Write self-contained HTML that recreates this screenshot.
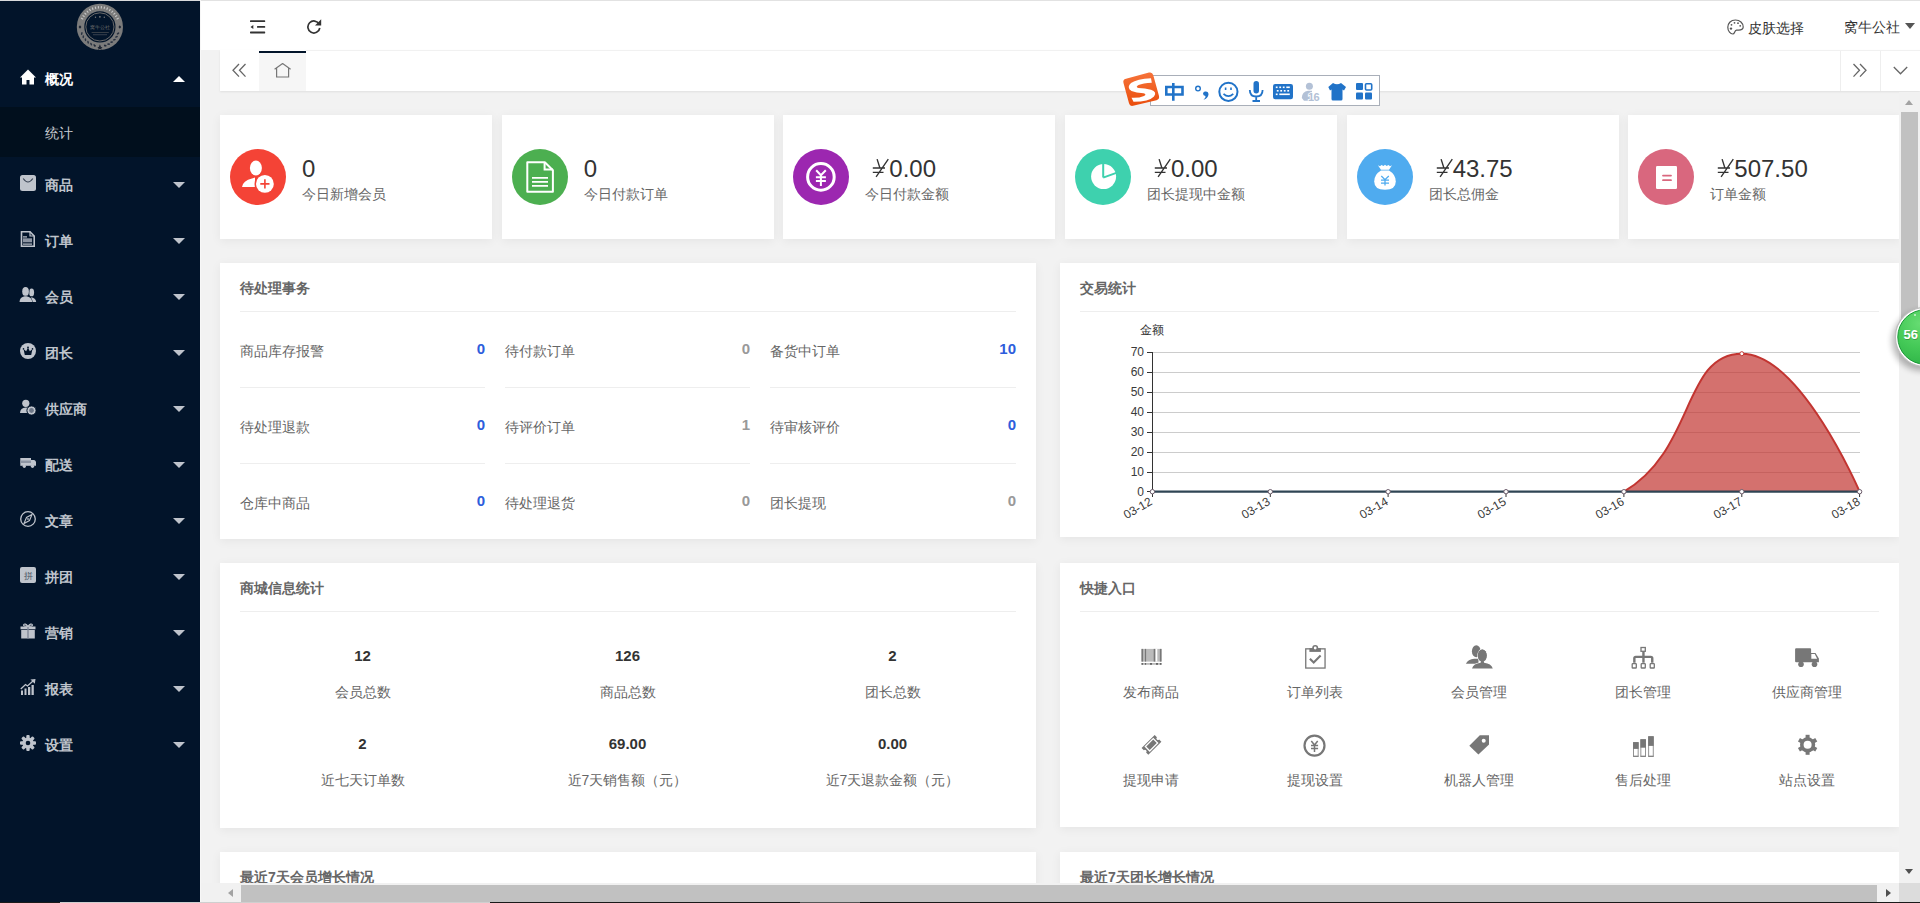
<!DOCTYPE html>
<html><head><meta charset="utf-8">
<style>
@font-face{font-family:"LibCJK";src:local("Liberation Sans");font-weight:normal;unicode-range:U+2E80-9FFF,U+F900-FAFF,U+FE30-FE4F,U+FF00-FFEF;size-adjust:133.33%}
@font-face{font-family:"LibCJK";src:local("Liberation Sans Bold"),local("LiberationSans-Bold");font-weight:bold;unicode-range:U+2E80-9FFF,U+F900-FAFF,U+FE30-FE4F,U+FF00-FFEF;size-adjust:133.33%}
*{margin:0;padding:0;box-sizing:border-box}
html,body{width:1920px;height:903px;overflow:hidden;background:#f2f2f2;font-family:"LibCJK","Liberation Sans",sans-serif;position:relative}
.a{position:absolute}
.t{position:absolute;white-space:nowrap;line-height:1}
/* sidebar */
#side{left:0;top:0;width:200px;height:903px;background:#02142a}
.mi{position:absolute;left:0;width:200px;height:56px}
.mi .ic{position:absolute;left:20px;top:19px;width:16px;height:16px}
.mi .tx{position:absolute;left:45px;top:21px;font-size:14px;line-height:14px;color:#bfc4cc;font-weight:bold}
.mi .ar{position:absolute;left:173px;top:26px;width:0;height:0;border-left:6px solid transparent;border-right:6px solid transparent;border-top:6px solid #bfc4cc}
/* header */
#hdr{left:200px;top:0;width:1720px;height:50px;background:#fff;border-top:1px solid #e2e2e2}
#tabs{left:220px;top:50px;width:1700px;height:41px;background:#fff;box-shadow:0 1px 2px rgba(0,0,0,.08)}
.card{position:absolute;background:#fff;box-shadow:0 2px 10px 0 rgba(0,0,0,.06)}
</style></head><body>

<!-- SIDEBAR -->
<div id="side" class="a">
  <div class="a" style="left:0;top:0;width:200px;height:1px;background:#d9dadc"></div>
  <svg class="a" style="left:75px;top:2px" width="50" height="50" viewBox="75 2 50 50"><circle cx="99.9" cy="26.9" r="23.1" fill="#7b7b7b"/><g fill="#c9c9c9"><rect x="81.59" y="17.42" width="1.1" height="2.4" transform="rotate(-65.0 82.14 18.62)"/><rect x="83.04" y="14.83" width="1.1" height="2.4" transform="rotate(-56.3 83.59 16.03)"/><rect x="84.86" y="12.50" width="1.1" height="2.4" transform="rotate(-47.7 85.41 13.70)"/><rect x="87.02" y="10.47" width="1.1" height="2.4" transform="rotate(-39.0 87.57 11.67)"/><rect x="89.45" y="8.78" width="1.1" height="2.4" transform="rotate(-30.3 90.00 9.98)"/><rect x="92.11" y="7.48" width="1.1" height="2.4" transform="rotate(-21.7 92.66 8.68)"/><rect x="94.94" y="6.60" width="1.1" height="2.4" transform="rotate(-13.0 95.49 7.80)"/><rect x="97.87" y="6.16" width="1.1" height="2.4" transform="rotate(-4.3 98.42 7.36)"/><rect x="100.83" y="6.16" width="1.1" height="2.4" transform="rotate(4.3 101.38 7.36)"/><rect x="103.76" y="6.60" width="1.1" height="2.4" transform="rotate(13.0 104.31 7.80)"/><rect x="106.59" y="7.48" width="1.1" height="2.4" transform="rotate(21.7 107.14 8.68)"/><rect x="109.25" y="8.78" width="1.1" height="2.4" transform="rotate(30.3 109.80 9.98)"/><rect x="111.68" y="10.47" width="1.1" height="2.4" transform="rotate(39.0 112.23 11.67)"/><rect x="113.84" y="12.50" width="1.1" height="2.4" transform="rotate(47.7 114.39 13.70)"/><rect x="115.66" y="14.83" width="1.1" height="2.4" transform="rotate(56.3 116.21 16.03)"/><rect x="117.11" y="17.42" width="1.1" height="2.4" transform="rotate(65.0 117.66 18.62)"/></g><g fill="#2a3342"><ellipse cx="81.76" cy="33.50" rx="1.5" ry="0.8" transform="rotate(-75.0 81.76 33.50)"/><ellipse cx="83.32" cy="36.77" rx="1.5" ry="0.8" transform="rotate(-85.8 83.32 36.77)"/><ellipse cx="85.45" cy="39.70" rx="1.5" ry="0.8" transform="rotate(-96.5 85.45 39.70)"/><ellipse cx="88.10" cy="42.17" rx="1.5" ry="0.8" transform="rotate(-107.3 88.10 42.17)"/><ellipse cx="91.16" cy="44.11" rx="1.5" ry="0.8" transform="rotate(-118.1 91.16 44.11)"/><ellipse cx="94.53" cy="45.44" rx="1.5" ry="0.8" transform="rotate(-128.8 94.53 45.44)"/><ellipse cx="105.27" cy="45.44" rx="1.5" ry="0.8" transform="rotate(-161.2 105.27 45.44)"/><ellipse cx="108.64" cy="44.11" rx="1.5" ry="0.8" transform="rotate(-171.9 108.64 44.11)"/><ellipse cx="111.70" cy="42.17" rx="1.5" ry="0.8" transform="rotate(-182.7 111.70 42.17)"/><ellipse cx="114.35" cy="39.70" rx="1.5" ry="0.8" transform="rotate(-193.5 114.35 39.70)"/><ellipse cx="116.48" cy="36.77" rx="1.5" ry="0.8" transform="rotate(-204.2 116.48 36.77)"/><ellipse cx="118.04" cy="33.50" rx="1.5" ry="0.8" transform="rotate(-215.0 118.04 33.50)"/></g><path d="M99.9 44.2 L101.0 47 L102.5 47 L101.30000000000001 48.3 L101.80000000000001 49.8 L99.9 48.9 L98.0 49.8 L98.5 48.3 L97.30000000000001 47 L98.80000000000001 47 Z" fill="#1d2533"/><circle cx="94.9" cy="45.8" r="0.8" fill="#1d2533"/><circle cx="104.9" cy="45.8" r="0.8" fill="#1d2533"/><path d="M80 25.3 L81.4 27 L80 28.7 L78.6 27 Z M119.8 25.3 L121.2 27 L119.8 28.7 L118.4 27 Z" fill="#1d2533"/><circle cx="99.9" cy="26.9" r="15.6" fill="#02142a"/><circle cx="99.9" cy="26.9" r="14.1" fill="none" stroke="#6a6a6a" stroke-width="1"/><g fill="#7a7a7a"><circle cx="95.5" cy="17.3" r="0.7"/><circle cx="99.9" cy="16.8" r="0.9"/><circle cx="104.3" cy="17.3" r="0.7"/></g><text x="99.9" y="29.2" font-size="5.2" fill="#6e6e6e" text-anchor="middle" font-family="LibCJK, Liberation Serif, serif">窝牛公社</text><rect x="91.6" y="32.3" width="17.2" height="0.6" fill="#5a5a5a"/><rect x="93" y="34.3" width="14" height="0.9" fill="#3c4452"/></svg>
  <!-- 概况 -->
  <div class="mi" style="top:50px">
    <svg class="ic" viewBox="0 0 16 16"><path d="M8 0.5 L16 8.5 L14 8.5 L14 15.5 L9.5 15.5 L9.5 11 L6.5 11 L6.5 15.5 L2 15.5 L2 8.5 L0 8.5 Z" fill="#fff"/></svg>
    <div class="tx" style="color:#fff">概况</div>
    <div class="a" style="left:173px;top:26px;width:0;height:0;border-left:6px solid transparent;border-right:6px solid transparent;border-bottom:6px solid #fff"></div>
  </div>
  <div class="a" style="left:0;top:107px;width:200px;height:50px;background:#010f1d">
    <div class="t cj" style="left:45px;top:18px;font-size:14px;color:#c6cad0">统计</div>
  </div>
  <!-- 商品 -->
  <div class="mi" style="top:156px">
    <svg class="ic" viewBox="0 0 16 16"><rect x="0" y="0" width="16" height="16" rx="2.5" fill="#bfc4cc"/><path d="M3.2 3.5 Q8 10.5 12.8 3.5" fill="none" stroke="#3c4656" stroke-width="1.1"/></svg>
    <div class="tx">商品</div><div class="ar"></div>
  </div>
  <!-- 订单 -->
  <div class="mi" style="top:212px">
    <svg class="ic" viewBox="0 0 16 16"><path d="M1.5 0.8 H10 L14.2 5 V15.2 H1.5 Z" fill="none" stroke="#bfc4cc" stroke-width="1.6"/><path d="M10 0.8 V5 H14.2" fill="none" stroke="#bfc4cc" stroke-width="1.2"/><rect x="3" y="5.3" width="4" height="1.2" fill="#bfc4cc"/><rect x="3" y="7.3" width="9" height="4" fill="#8d95a3"/><rect x="3" y="12.5" width="9" height="1.2" fill="#bfc4cc"/></svg>
    <div class="tx">订单</div><div class="ar"></div>
  </div>
  <!-- 会员 -->
  <div class="mi" style="top:268px">
    <svg class="ic" viewBox="0 0 16 16" overflow="visible"><ellipse cx="11.6" cy="5.4" rx="2.5" ry="3.9" fill="#bfc4cc"/><path d="M11 10.2 Q15.6 10.8 16.2 14.9 H12 Z" fill="#bfc4cc"/><g fill="#bfc4cc" stroke="#02142a" stroke-width="0.9" paint-order="stroke"><ellipse cx="5.55" cy="4.55" rx="3.35" ry="4.5"/><path d="M-0.5 14.9 Q-0.2 10.2 4.6 9.3 L6.5 9.3 Q11.8 10.2 12.2 14.9 Z"/></g></svg>
    <div class="tx">会员</div><div class="ar"></div>
  </div>
  <!-- 团长 -->
  <div class="mi" style="top:324px">
    <svg class="ic" viewBox="0 0 16 16"><circle cx="8" cy="8" r="8" fill="#bfc4cc"/><path d="M4.8 12 L3.6 6.2 L6.2 8.2 L8 4.6 L9.8 8.2 L12.4 6.2 L11.2 12 Z" fill="#02142a"/><circle cx="8" cy="4.3" r="0.9" fill="#02142a"/><circle cx="3.5" cy="5.9" r="0.8" fill="#02142a"/><circle cx="12.5" cy="5.9" r="0.8" fill="#02142a"/></svg>
    <div class="tx">团长</div><div class="ar"></div>
  </div>
  <!-- 供应商 -->
  <div class="mi" style="top:380px">
    <svg class="ic" viewBox="0 0 16 16"><circle cx="5.8" cy="4.3" r="3.6" fill="#bfc4cc"/><path d="M0 14 Q0.2 8.7 5.8 8.5 Q8 8.6 9 9.5 L7 14 Z" fill="#bfc4cc"/><circle cx="11.5" cy="11.5" r="4.6" fill="#bfc4cc" stroke="#02142a" stroke-width="1"/><circle cx="11.5" cy="11.5" r="2.4" fill="#6d7787"/></svg>
    <div class="tx">供应商</div><div class="ar"></div>
  </div>
  <!-- 配送 -->
  <div class="mi" style="top:436px">
    <svg class="ic" viewBox="0 0 16 16"><rect x="0.3" y="3" width="10.7" height="7.8" fill="#bfc4cc"/><rect x="0.3" y="5.5" width="10.7" height="2.5" fill="#8d95a3"/><path d="M11 5 H14.2 Q16.2 6 16.2 8 V10.8 H11 Z" fill="#bfc4cc"/><circle cx="4.3" cy="11.3" r="1.6" fill="#bfc4cc"/><circle cx="12.5" cy="11.3" r="1.6" fill="#bfc4cc"/></svg>
    <div class="tx">配送</div><div class="ar"></div>
  </div>
  <!-- 文章 -->
  <div class="mi" style="top:492px">
    <svg class="ic" viewBox="0 0 16 16"><circle cx="8" cy="8" r="7.3" fill="none" stroke="#bfc4cc" stroke-width="1.3"/><path d="M12 3.5 L9.5 9.5 L4 12.5 L6.5 6.5 Z" fill="none" stroke="#bfc4cc" stroke-width="1.1"/><circle cx="8" cy="8" r="1.1" fill="#8d95a3"/></svg>
    <div class="tx">文章</div><div class="ar"></div>
  </div>
  <!-- 拼团 -->
  <div class="mi" style="top:548px">
    <svg class="ic" viewBox="0 0 16 16"><rect x="0" y="0" width="16" height="16" rx="2" fill="#bfc4cc"/><text x="8" y="11.5" font-size="9" fill="#4a5464" text-anchor="middle">拼</text></svg>
    <div class="tx">拼团</div><div class="ar"></div>
  </div>
  <!-- 营销 -->
  <div class="mi" style="top:604px">
    <svg class="ic" viewBox="0 0 16 16"><rect x="0.5" y="3.5" width="15" height="2.8" fill="#bfc4cc"/><rect x="1.2" y="7" width="13.6" height="8.5" fill="#bfc4cc"/><rect x="7.3" y="3.5" width="1.4" height="12" fill="#7f8898"/><path d="M8 3.3 Q5 -0.5 3.5 2 Q3.5 3.3 8 3.3 Q11 -0.5 12.5 2 Q12.5 3.3 8 3.3" fill="none" stroke="#bfc4cc" stroke-width="1.2"/></svg>
    <div class="tx">营销</div><div class="ar"></div>
  </div>
  <!-- 报表 -->
  <div class="mi" style="top:660px">
    <svg class="ic" viewBox="0 0 16 16"><rect x="1" y="11.5" width="2" height="4.5" fill="#bfc4cc"/><rect x="4.5" y="9.5" width="2" height="6.5" fill="#bfc4cc"/><rect x="8" y="8" width="2.3" height="8" fill="#bfc4cc"/><rect x="11.5" y="6" width="2.3" height="10" fill="#bfc4cc"/><path d="M0.8 10 L5.5 5.5 L7.5 7 L13 2" fill="none" stroke="#bfc4cc" stroke-width="1.3"/><path d="M10.5 0.5 L15.5 0 L14.8 4.8 Z" fill="#bfc4cc"/></svg>
    <div class="tx">报表</div><div class="ar"></div>
  </div>
  <!-- 设置 -->
  <div class="mi" style="top:716px">
    <svg class="ic" viewBox="0 0 16 16"><g fill="#bfc4cc"><circle cx="8" cy="8" r="5.6"/><rect x="6.3" y="0" width="3.4" height="16" rx="1"/><rect x="0" y="6.3" width="16" height="3.4" rx="1"/><rect x="6.3" y="0" width="3.4" height="16" rx="1" transform="rotate(45 8 8)"/><rect x="6.3" y="0" width="3.4" height="16" rx="1" transform="rotate(-45 8 8)"/></g><circle cx="8" cy="8" r="2.3" fill="#02142a"/></svg>
    <div class="tx">设置</div><div class="ar"></div>
  </div>
</div>

<!-- HEADER -->
<div id="hdr" class="a"></div>
<div class="a" style="left:200px;top:0;width:1px;height:903px;background:#f7f7f7"></div>
<svg class="a" style="left:250px;top:20px" width="16" height="14" viewBox="0 0 16 14">
  <rect x="0" y="0.3" width="15.2" height="1.8" rx="0.6" fill="#333"/>
  <rect x="7" y="6" width="8.2" height="1.8" rx="0.6" fill="#333"/>
  <rect x="0" y="11.6" width="15.2" height="1.8" rx="0.6" fill="#333"/>
  <path d="M0.5 6.9 L3.3 4.9 V8.9 Z" fill="#333"/>
</svg>
<svg class="a" style="left:306px;top:18px" width="16" height="16" viewBox="0 0 16 16">
  <path d="M13.2 6.2 A6 6 0 1 0 13.8 10" fill="none" stroke="#333" stroke-width="1.7"/>
  <path d="M15.2 1.2 V7.4 H9 Z" fill="#333"/>
</svg>
<svg class="a" style="left:1727px;top:19px" width="17" height="16" viewBox="0 0 17 16">
  <path d="M8.5 1 C3.5 1 0.8 4.5 0.8 8.3 C0.8 12.5 3.6 15 5.8 15 C8 15 7.2 11.5 9.5 11.2 C12.5 10.8 16.2 11.8 16.2 8 C16.2 4 12.8 1 8.5 1 Z" fill="none" stroke="#555" stroke-width="1.2"/>
  <circle cx="4" cy="9.6" r="1.2" fill="#555"/><circle cx="4.5" cy="5.8" r="0.9" fill="#555"/><circle cx="7.5" cy="3.8" r="0.9" fill="#555"/><circle cx="11" cy="4.2" r="0.9" fill="#555"/><circle cx="13.2" cy="6.8" r="0.9" fill="#555"/>
</svg>
<div class="t cj" style="left:1748px;top:20px;font-size:14px;color:#333">皮肤选择</div>
<div class="t cj" style="left:1844px;top:19px;font-size:14px;color:#333">窝牛公社</div>
<div class="a" style="left:1905px;top:23px;width:0;height:0;border-left:5.5px solid transparent;border-right:5.5px solid transparent;border-top:6px solid #555"></div>

<!-- TABS -->
<div id="tabs" class="a"></div>
<div class="a" style="left:306px;top:50px;width:1614px;height:1px;background:#f1f1f1"></div>
<div class="a" style="left:259px;top:51px;width:47px;height:40px;background:#f6f6f6;border-top:2px solid #02142a"></div>
<svg class="a" style="left:232px;top:63px" width="15" height="15" viewBox="0 0 15 15">
  <path d="M7 1 L1 7.3 L7 13.6 M13.5 1 L7.5 7.3 L13.5 13.6" fill="none" stroke="#666" stroke-width="1.3"/>
</svg>
<svg class="a" style="left:274px;top:63px" width="18" height="15" viewBox="0 0 18 15">
  <path d="M0.6 6.3 L8.6 0.5 L16.6 6.3 M2.6 5 V14 H14.6 V5" fill="none" stroke="#777" stroke-width="1.2"/>
</svg>
<div class="a" style="left:1840px;top:51px;width:1px;height:40px;background:#eee"></div>
<div class="a" style="left:1880px;top:51px;width:1px;height:40px;background:#eee"></div>
<svg class="a" style="left:1852px;top:63px" width="15" height="15" viewBox="0 0 15 15">
  <path d="M1.5 1 L7.5 7.3 L1.5 13.6 M8 1 L14 7.3 L8 13.6" fill="none" stroke="#666" stroke-width="1.3"/>
</svg>
<svg class="a" style="left:1892.5px;top:66px" width="15" height="10" viewBox="0 0 15 10">
  <path d="M0.8 1 L7.5 7.8 L14.2 1" fill="none" stroke="#666" stroke-width="1.3"/>
</svg>

<!-- CONTENT -->
<!-- STAT CARDS -->
<style>
.sc{top:115px;width:272px;height:124px}
.sc svg{position:absolute;left:8px;top:32px}
.sv{position:absolute;left:82px;top:42px;font-size:24px;line-height:24px;color:#333;white-space:nowrap}
.sl{position:absolute;left:82px;top:71px;font-size:14px;line-height:14px;color:#666;white-space:nowrap}
.pt{position:absolute;left:20px;top:17px;font-size:14px;line-height:14px;font-weight:bold;color:#666;white-space:nowrap}
.pd{position:absolute;left:20px;top:48px;height:1px;background:#eee}
.rl{position:absolute;font-size:14px;line-height:14px;color:#666;white-space:nowrap}
.rv{position:absolute;font-size:15px;line-height:15px;font-weight:bold;white-space:nowrap;text-align:right}
.rd{position:absolute;height:1px;background:#eee}
.blue{color:#2d5ddc}.grey{color:#999}
.mn{position:absolute;width:265px;text-align:center;font-size:15px;line-height:15px;font-weight:bold;color:#333}
.ml{position:absolute;width:265px;text-align:center;font-size:14px;line-height:14px;color:#666}
.ql{position:absolute;width:164px;text-align:center;font-size:14px;line-height:14px;color:#666}
.qi{position:absolute}
.sl,.pt,.rl,.ml,.ql,.mi .tx,.cj{transform:translateY(1px)}
</style>
<div class="card sc" style="left:220px">
  <svg width="60" height="60" viewBox="0 0 60 60"><circle cx="30" cy="30" r="28" fill="#f44336"/>
    <ellipse cx="27.9" cy="21" rx="6" ry="7.4" fill="#fff"/>
    <path d="M14 40 Q15 33.5 24 31.5 L27 30.5 L27 40 Z" fill="#fff"/>
    <circle cx="36.9" cy="36.9" r="10.4" fill="#f44336"/>
    <circle cx="36.9" cy="36.9" r="8.9" fill="#fff"/>
    <path d="M32.3 36.9 H41.5 M36.9 32.3 V41.5" stroke="#f44336" stroke-width="1.6"/>
  </svg>
  <div class="sv">0</div><div class="sl">今日新增会员</div>
</div>
<div class="card sc" style="left:501.67px">
  <svg width="60" height="60" viewBox="0 0 60 60"><circle cx="30" cy="30" r="28" fill="#4caf50"/>
    <path d="M17.3 15.3 H34.8 L42.9 23.2 V44.8 H17.3 Z" fill="none" stroke="#fff" stroke-width="2" stroke-linejoin="round"/>
    <path d="M34.6 15.3 V22.6 H42.9" fill="none" stroke="#fff" stroke-width="2"/>
    <path d="M22 30.9 H38 M22 34.9 H38 M22 38.9 H38" stroke="#fff" stroke-width="1.9"/>
  </svg>
  <div class="sv">0</div><div class="sl">今日付款订单</div>
</div>
<div class="card sc" style="left:783.33px">
  <svg width="60" height="60" viewBox="0 0 60 60"><circle cx="30" cy="30" r="28" fill="#9c27b0"/>
    <circle cx="29.9" cy="29.9" r="13.3" fill="none" stroke="#fff" stroke-width="3"/>
    <path d="M25.2 23.3 L29.9 28.3 L34.8 23.3 M24.9 30.2 H34.9 M24.9 33.9 H34.9 M29.9 28 V38.9" fill="none" stroke="#fff" stroke-width="2"/>
  </svg>
  <div class="sv" style="left:89px"><svg style="position:absolute;left:-1px;top:-1px" width="18" height="22" viewBox="0 0 18 22"><path d="M6.1 3.1 L9 12.3 M17.3 3.1 L5.1 20.8 M1.8 12 H14 M1.8 16.3 H12.5" fill="none" stroke="#333" stroke-width="1.35"/></svg><span style="padding-left:17px">0.00</span></div>
  <div class="sl">今日付款金额</div>
</div>
<div class="card sc" style="left:1065px">
  <svg width="60" height="60" viewBox="0 0 60 60"><circle cx="30" cy="30" r="28" fill="#3ed1ae"/>
    <circle cx="30.6" cy="29.6" r="12.5" fill="#fff"/>
    <path d="M30.2 30.6 V16 M30.2 30.6 L44 25.6" stroke="#3ed1ae" stroke-width="2" fill="none"/>
  </svg>
  <div class="sv" style="left:89px"><svg style="position:absolute;left:-1px;top:-1px" width="18" height="22" viewBox="0 0 18 22"><path d="M6.1 3.1 L9 12.3 M17.3 3.1 L5.1 20.8 M1.8 12 H14 M1.8 16.3 H12.5" fill="none" stroke="#333" stroke-width="1.35"/></svg><span style="padding-left:17px">0.00</span></div>
  <div class="sl">团长提现中金额</div>
</div>
<div class="card sc" style="left:1346.67px">
  <svg width="60" height="60" viewBox="0 0 60 60"><circle cx="30" cy="30" r="28" fill="#4fabef"/>
    <path d="M22.9 18.3 L25 19.2 L26.5 18 L28.5 19 L30 17.8 L31.6 19 L33.5 18 L35 19.2 L37 18.3 L34 22.8 H26 Z" fill="#fff"/>
    <path d="M26 23.5 H34 Q40.8 27.5 40.8 34.5 Q40.8 42.8 30 42.8 Q19.2 42.8 19.2 34.5 Q19.2 27.5 26 23.5 Z" fill="#fff"/>
    <path d="M26.3 29 L30 32.6 L33.8 29 M26 33.2 H34 M26 36.2 H34 M30 32.5 V38.5" fill="none" stroke="#4fabef" stroke-width="1.3"/>
  </svg>
  <div class="sv" style="left:89px"><svg style="position:absolute;left:-1px;top:-1px" width="18" height="22" viewBox="0 0 18 22"><path d="M6.1 3.1 L9 12.3 M17.3 3.1 L5.1 20.8 M1.8 12 H14 M1.8 16.3 H12.5" fill="none" stroke="#333" stroke-width="1.35"/></svg><span style="padding-left:17px">43.75</span></div>
  <div class="sl">团长总佣金</div>
</div>
<div class="card sc" style="left:1628.33px">
  <svg width="60" height="60" viewBox="0 0 60 60"><circle cx="30" cy="30" r="28" fill="#d9677e"/>
    <rect x="20" y="19" width="21" height="23" rx="1.2" fill="#fff"/>
    <path d="M27 28.6 H35 M27 33.2 H35" stroke="#d9677e" stroke-width="1.8" stroke-linecap="round"/>
  </svg>
  <div class="sv" style="left:89px"><svg style="position:absolute;left:-1px;top:-1px" width="18" height="22" viewBox="0 0 18 22"><path d="M6.1 3.1 L9 12.3 M17.3 3.1 L5.1 20.8 M1.8 12 H14 M1.8 16.3 H12.5" fill="none" stroke="#333" stroke-width="1.35"/></svg><span style="padding-left:17px">507.50</span></div>
  <div class="sl">订单金额</div>
</div>

<!-- PANEL A: 待处理事务 -->
<div class="card" style="left:220px;top:263px;width:816px;height:276px">
  <div class="pt">待处理事务</div>
  <div class="pd" style="width:776px"></div>
  <div class="rl" style="left:20px;top:80px">商品库存报警</div><div class="rv blue" style="left:200px;width:65px;top:78px">0</div>
  <div class="rd" style="left:20px;top:124px;width:245px"></div>
  <div class="rl" style="left:20px;top:156px">待处理退款</div><div class="rv blue" style="left:200px;width:65px;top:154px">0</div>
  <div class="rd" style="left:20px;top:200px;width:245px"></div>
  <div class="rl" style="left:20px;top:232px">仓库中商品</div><div class="rv blue" style="left:200px;width:65px;top:230px">0</div>

  <div class="rl" style="left:285px;top:80px">待付款订单</div><div class="rv grey" style="left:465px;width:65px;top:78px">0</div>
  <div class="rd" style="left:285px;top:124px;width:245px"></div>
  <div class="rl" style="left:285px;top:156px">待评价订单</div><div class="rv grey" style="left:465px;width:65px;top:154px">1</div>
  <div class="rd" style="left:285px;top:200px;width:245px"></div>
  <div class="rl" style="left:285px;top:232px">待处理退货</div><div class="rv grey" style="left:465px;width:65px;top:230px">0</div>

  <div class="rl" style="left:550px;top:80px">备货中订单</div><div class="rv blue" style="left:731px;width:65px;top:78px">10</div>
  <div class="rd" style="left:550px;top:124px;width:246px"></div>
  <div class="rl" style="left:550px;top:156px">待审核评价</div><div class="rv blue" style="left:731px;width:65px;top:154px">0</div>
  <div class="rd" style="left:550px;top:200px;width:246px"></div>
  <div class="rl" style="left:550px;top:232px">团长提现</div><div class="rv grey" style="left:731px;width:65px;top:230px">0</div>
</div>

<!-- PANEL B: 交易统计 -->
<div class="card" style="left:1060px;top:263px;width:839px;height:274px">
  <div class="pt">交易统计</div>
  <div class="pd" style="width:799px"></div>
</div>
<svg class="a" style="left:1060px;top:263px" width="839" height="274" viewBox="1060 263 839 274">
  <g stroke="#ccc" stroke-width="1">
    <path d="M1152 352.5 H1860 M1152 372.5 H1860 M1152 392.5 H1860 M1152 412.5 H1860 M1152 432.5 H1860 M1152 452.5 H1860 M1152 472.5 H1860"/>
  </g>
  <path d="M1152.5 352 V492" stroke="#333" stroke-width="1"/>
  <path d="M1147 352.5 H1152 M1147 372.5 H1152 M1147 392.5 H1152 M1147 412.5 H1152 M1147 432.5 H1152 M1147 452.5 H1152 M1147 472.5 H1152 M1147 491.5 H1152" stroke="#333" stroke-width="1"/>
  <path d="M1152.4 491.7 L1623.9 491.7 C1695.3 449.9 1682.8 353.7 1741.8 353.7 C1800.7 353.7 1859.6 491.7 1859.6 491.7 Z" fill="#c23531" fill-opacity="0.7"/>
  <path d="M1623.9 491.7 C1695.3 449.9 1682.8 353.7 1741.8 353.7 C1800.7 353.7 1859.6 491.7 1859.6 491.7" fill="none" stroke="#c23531" stroke-width="2"/>
  <path d="M1152.4 491.7 H1860" stroke="#2f4554" stroke-width="2.2"/>
  <path d="M1152.5 492 V497 M1270.3 492 V497 M1388.1 492 V497 M1506 492 V497 M1623.9 492 V497 M1741.8 492 V497 M1859.6 492 V497" stroke="#333" stroke-width="1"/>
  <g fill="#fff" stroke="#6b5b6a" stroke-width="1">
    <circle cx="1152.4" cy="491.7" r="2.2"/><circle cx="1270.3" cy="491.7" r="2.2"/><circle cx="1388.1" cy="491.7" r="2.2"/><circle cx="1506" cy="491.7" r="2.2"/><circle cx="1623.9" cy="491.7" r="2.2"/><circle cx="1741.8" cy="491.7" r="2.2"/><circle cx="1859.6" cy="491.7" r="2.2"/>
    <circle cx="1741.8" cy="353.7" r="2" stroke="#c23531"/>
  </g>
  <g font-family="LibCJK, Liberation Sans, sans-serif" font-size="12" fill="#3a3a3a" text-anchor="end">
    <text x="1144" y="355.5">70</text><text x="1144" y="375.5">60</text><text x="1144" y="395.5">50</text><text x="1144" y="415.5">40</text><text x="1144" y="435.5">30</text><text x="1144" y="455.5">20</text><text x="1144" y="475.5">10</text><text x="1144" y="495.5">0</text>
  </g>
  <text x="1140" y="334" font-family="LibCJK, Liberation Sans, sans-serif" font-size="12" fill="#333">金额</text>
  <g font-family="LibCJK, Liberation Sans, sans-serif" font-size="12" fill="#3a3a3a" text-anchor="end">
    <text transform="translate(1152,500) rotate(-30)" x="-1" y="4">03-12</text>
    <text transform="translate(1270,500) rotate(-30)" x="-1" y="4">03-13</text>
    <text transform="translate(1388,500) rotate(-30)" x="-1" y="4">03-14</text>
    <text transform="translate(1506,500) rotate(-30)" x="-1" y="4">03-15</text>
    <text transform="translate(1624,500) rotate(-30)" x="-1" y="4">03-16</text>
    <text transform="translate(1742,500) rotate(-30)" x="-1" y="4">03-17</text>
    <text transform="translate(1860,500) rotate(-30)" x="-1" y="4">03-18</text>
  </g>
</svg>

<!-- PANEL C: 商城信息统计 -->
<div class="card" style="left:220px;top:563px;width:816px;height:265px">
  <div class="pt">商城信息统计</div>
  <div class="pd" style="width:776px"></div>
  <div class="mn" style="left:10px;top:85px">12</div><div class="ml" style="left:10px;top:121px">会员总数</div>
  <div class="mn" style="left:275px;top:85px">126</div><div class="ml" style="left:275px;top:121px">商品总数</div>
  <div class="mn" style="left:540px;top:85px">2</div><div class="ml" style="left:540px;top:121px">团长总数</div>
  <div class="mn" style="left:10px;top:173px">2</div><div class="ml" style="left:10px;top:209px">近七天订单数</div>
  <div class="mn" style="left:275px;top:173px">69.00</div><div class="ml" style="left:275px;top:209px">近7天销售额（元）</div>
  <div class="mn" style="left:540px;top:173px">0.00</div><div class="ml" style="left:540px;top:209px">近7天退款金额（元）</div>
</div>

<!-- PANEL D: 快捷入口 -->
<div class="card" style="left:1060px;top:563px;width:839px;height:264px">
  <div class="pt">快捷入口</div>
  <div class="pd" style="width:799px"></div>
  <div class="ql" style="left:9px;top:121px">发布商品</div>
  <div class="ql" style="left:173px;top:121px">订单列表</div>
  <div class="ql" style="left:337px;top:121px">会员管理</div>
  <div class="ql" style="left:501px;top:121px">团长管理</div>
  <div class="ql" style="left:665px;top:121px">供应商管理</div>
  <div class="ql" style="left:9px;top:209px">提现申请</div>
  <div class="ql" style="left:173px;top:209px">提现设置</div>
  <div class="ql" style="left:337px;top:209px">机器人管理</div>
  <div class="ql" style="left:501px;top:209px">售后处理</div>
  <div class="ql" style="left:665px;top:209px">站点设置</div>
</div>
<!-- quick icons -->
<svg class="a" style="left:1136px;top:640px" width="30" height="32" viewBox="0 0 30 32">
  <rect x="5.1" y="8.9" width="20.4" height="12.7" fill="#bbb"/>
  <rect x="19.3" y="8.9" width="2" height="12.7" fill="#fff"/>
  <g fill="#777"><rect x="5.7" y="8.9" width="1.4" height="12.7"/><rect x="8.9" y="8.9" width="1.2" height="12.7"/><rect x="17.7" y="8.9" width="1.6" height="12.7"/><rect x="23.9" y="8.9" width="1.6" height="12.7"/></g>
  <rect x="5.1" y="23" width="20.4" height="1.8" fill="#bbb"/>
  <g fill="#666"><rect x="5.7" y="23" width="1.4" height="1.8"/><rect x="8.9" y="23" width="1.2" height="1.8"/><rect x="14" y="23" width="2" height="1.8"/><rect x="20" y="23" width="2" height="1.8"/><rect x="23.9" y="23" width="1.6" height="1.8"/></g>
</svg>
<svg class="a" style="left:1300px;top:640px" width="30" height="32" viewBox="0 0 30 32">
  <rect x="5.75" y="8.85" width="19.3" height="19.2" fill="none" stroke="#777" stroke-width="1.3"/>
  <rect x="9.4" y="8.2" width="11.5" height="3.7" fill="#777"/>
  <circle cx="15.2" cy="8" r="2.2" fill="#fff" stroke="#777" stroke-width="1.6"/>
  <path d="M9.9 18.8 L13.7 22.6 L20.6 15.6" fill="none" stroke="#777" stroke-width="2.1"/>
</svg>
<svg class="a" style="left:1460px;top:640px" width="40" height="32" viewBox="0 0 40 32">
  <ellipse cx="16.3" cy="11.2" rx="4.4" ry="6" fill="#777"/>
  <path d="M5.9 23.8 Q8 19.4 14.2 18.8 L18.5 18.8 L18.5 23.8 Z" fill="#777"/>
  <g fill="#777" stroke="#fff" stroke-width="1.3" paint-order="stroke">
    <ellipse cx="22.3" cy="15.6" rx="4.4" ry="6.1"/>
    <path d="M12 28.5 Q13.5 23.6 20.6 22.8 L21.3 20 H23.5 L24.1 22.8 Q31.2 23.6 32.8 28.5 Z"/>
  </g>
  <ellipse cx="22.3" cy="15.6" rx="4.4" ry="6.1" fill="#777"/>
</svg>
<svg class="a" style="left:1628px;top:640px" width="30" height="32" viewBox="0 0 30 32">
  <g fill="none" stroke="#777">
    <rect x="13" y="7.5" width="4.3" height="3.8" stroke-width="1.3"/>
    <path d="M15.45 11.5 V22.8 M6.35 22.8 V18.3 Q6.35 16.85 7.8 16.85 H22.8 Q24.25 16.85 24.25 18.3 V22.8" stroke-width="2.4"/>
    <rect x="4.2" y="23.6" width="4.1" height="4.4" rx="0.6" stroke-width="1.3"/>
    <rect x="13.2" y="23.6" width="4.1" height="4.4" rx="0.6" stroke-width="1.3"/>
    <rect x="22.2" y="23.6" width="4.1" height="4.4" rx="0.6" stroke-width="1.3"/>
  </g>
</svg>
<svg class="a" style="left:1790px;top:640px" width="34" height="32" viewBox="0 0 34 32">
  <path d="M6.1 8.2 H20.1 Q21.1 8.2 21.1 9.2 V13.1 H25.5 L28.9 18.5 V22.3 H6.1 Q5.1 22.3 5.1 21.3 V9.2 Q5.1 8.2 6.1 8.2 Z" fill="#777"/>
  <path d="M21.3 14 H24.8 L27.1 18.8 H21.3 Z" fill="#fff"/>
  <circle cx="11" cy="24.2" r="2.8" fill="#777"/><circle cx="24.5" cy="24.2" r="2.8" fill="#777"/>
</svg>
<svg class="a" style="left:1136px;top:728px" width="30" height="32" viewBox="0 0 30 32">
  <g transform="translate(15.5 16.85) rotate(-45)">
    <path d="M-9.25 -4.75 H9.25 V-1.6 A1.6 1.6 0 0 0 9.25 1.6 V4.75 H-9.25 V1.6 A1.6 1.6 0 0 0 -9.25 -1.6 Z" fill="#777"/>
    <rect x="-5.6" y="-3.1" width="11.2" height="6.2" fill="none" stroke="#fff" stroke-width="1.3"/>
    <rect x="-3.6" y="-1.6" width="7.2" height="3.2" fill="#777"/>
  </g>
</svg>
<svg class="a" style="left:1300px;top:728px" width="30" height="32" viewBox="0 0 30 32">
  <circle cx="14.5" cy="17.6" r="10" fill="none" stroke="#777" stroke-width="2.2"/>
  <path d="M11.3 13.1 L14.5 17 L17.7 13.1 M11 17.4 H18.1 M11 20.5 H18.1 M14.5 17 V24.1" fill="none" stroke="#777" stroke-width="1.5"/>
</svg>
<svg class="a" style="left:1464px;top:728px" width="30" height="32" viewBox="0 0 30 32">
  <path d="M5.3 17.7 L15.8 7.3 H25 V16.5 L14.4 26.6 Z" fill="#777"/>
  <circle cx="19.7" cy="12.8" r="2" fill="#fff"/>
</svg>
<svg class="a" style="left:1628px;top:728px" width="30" height="32" viewBox="0 0 30 32">
  <g fill="none" stroke="#888" stroke-width="0.9"><rect x="5.55" y="14.6" width="4.6" height="13.7"/><rect x="12.85" y="11.7" width="4.6" height="16.6"/><rect x="20.65" y="8.7" width="4.6" height="19.6"/></g>
  <g fill="#777"><rect x="5.1" y="14.2" width="5.5" height="6.7"/><rect x="12.4" y="11.3" width="5.5" height="8.4"/><rect x="20.2" y="8.3" width="5.5" height="9.6"/>
  <rect x="5.1" y="27.8" width="5.5" height="0.9"/><rect x="12.4" y="27.8" width="5.5" height="0.9"/><rect x="20.2" y="27.8" width="5.5" height="0.9"/></g>
</svg>
<svg class="a" style="left:1792px;top:728px" width="30" height="32" viewBox="0 0 30 32">
  <g fill="#777" transform="translate(15.6 16.8)">
    <circle r="7.6"/>
    <rect x="-2" y="-10" width="4" height="20"/>
    <rect x="-2" y="-10" width="4" height="20" transform="rotate(60)"/>
    <rect x="-2" y="-10" width="4" height="20" transform="rotate(-60)"/>
  </g>
  <circle cx="15.6" cy="16.8" r="4" fill="#fff"/>
</svg>

<!-- PANEL E, F -->
<div class="card" style="left:220px;top:852px;width:816px;height:60px">
  <div class="pt">最近7天会员增长情况</div>
</div>
<div class="card" style="left:1060px;top:852px;width:839px;height:60px">
  <div class="pt">最近7天团长增长情况</div>
</div>

<!-- SCROLLBARS -->
<div class="a" style="left:1899px;top:92px;width:21px;height:791px;background:#f1f1f1"></div>
<div class="a" style="left:1901px;top:112px;width:17px;height:240px;background:#c1c1c1"></div>
<div class="a" style="left:1905px;top:100px;width:0;height:0;border-left:4.5px solid transparent;border-right:4.5px solid transparent;border-bottom:5px solid #a3a3a3"></div>
<div class="a" style="left:1905px;top:869px;width:0;height:0;border-left:4.5px solid transparent;border-right:4.5px solid transparent;border-top:5px solid #505050"></div>
<div class="a" style="left:201px;top:883px;width:1698px;height:19px;background:#f1f1f1"></div>
<div class="a" style="left:241px;top:885px;width:1636px;height:17px;background:#c1c1c1"></div>
<div class="a" style="left:228px;top:889px;width:0;height:0;border-top:4.5px solid transparent;border-bottom:4.5px solid transparent;border-right:5px solid #a3a3a3"></div>
<div class="a" style="left:1886px;top:889px;width:0;height:0;border-top:4.5px solid transparent;border-bottom:4.5px solid transparent;border-left:5px solid #505050"></div>
<div class="a" style="left:1899px;top:883px;width:21px;height:19px;background:#dcdcdc"></div>
<div class="a" style="left:0;top:902px;width:1920px;height:1px;background:#1a1a1a"></div><div class="a" style="left:60px;top:902px;width:430px;height:1px;background:#cfcfcf"></div><div class="a" style="left:800px;top:902px;width:60px;height:1px;background:#555"></div>

<!-- green ball -->
<svg class="a" style="left:1885px;top:298px" width="35" height="80" viewBox="1885 298 35 80">
  <defs>
    <radialGradient id="gb" cx="0.4" cy="0.25" r="0.8"><stop offset="0" stop-color="#66dc72"/><stop offset="0.55" stop-color="#44c957"/><stop offset="1" stop-color="#2fb447"/></radialGradient>
    <filter id="sh" x="-50%" y="-50%" width="200%" height="200%"><feGaussianBlur stdDeviation="3"/></filter>
  </defs>
  <circle cx="1922" cy="341" r="30" fill="#000" opacity="0.28" filter="url(#sh)"/>
  <circle cx="1925" cy="337" r="29.6" fill="#fff" stroke="#bdbdbd" stroke-width="1.2"/>
  <circle cx="1925" cy="337" r="27.2" fill="url(#gb)" stroke="#1e9a3a" stroke-width="1"/>
  <circle cx="1915" cy="315" r="0.9" fill="#fff" opacity="0.8"/>
  <text x="1904" y="339.8" font-family="LibCJK, Liberation Sans, sans-serif" font-size="13" font-weight="bold" fill="#000" opacity="0.25">56</text>
  <text x="1903.5" y="339.3" font-family="LibCJK, Liberation Sans, sans-serif" font-size="13" font-weight="bold" fill="#fff">56</text>
</svg>

<!-- SOGOU toolbar -->
<svg class="a" style="left:1120px;top:70px" width="262" height="38" viewBox="1120 70 262 38">
  <rect x="1150.5" y="75.5" width="229" height="30" fill="#fff" stroke="#a9afb9" stroke-width="1"/>
  <defs><linearGradient id="sg" x1="0" y1="0" x2="0" y2="1"><stop offset="0" stop-color="#f6733a"/><stop offset="1" stop-color="#ea4d0c"/></linearGradient></defs>
  <path d="M1123.5 83 Q1122.5 79.5 1126 78.7 L1149 72.6 Q1152.3 71.8 1153.2 75 L1159 96 Q1159.7 99.3 1156.5 100.2 L1133 105.8 Q1129.8 106.5 1129 103.3 Z" fill="url(#sg)"/>
  <path d="M1151 78.2 Q1137 78.8 1131 83 Q1126 87.5 1131.5 91 Q1136 92.8 1143.5 93.2 Q1147 94 1144 96 Q1139 98.2 1131.5 97.8 L1133.5 101.8 Q1149 101.8 1154 96.5 Q1157.5 92 1151 89.8 Q1145 88.3 1138.5 88 Q1135 87.2 1138.5 85 Q1143 83.2 1151.8 82.8 Z" fill="#fff"/>
  <g fill="#2173c8">
    <path d="M1173.3 83 V100.7 M1166.3 87 H1182.5 V94.5 H1166.3 Z" fill="none" stroke="#2173c8" stroke-width="2.6"/>
    <circle cx="1198" cy="88.6" r="2.3" fill="none" stroke="#2173c8" stroke-width="1.4"/>
    <path d="M1205 91.5 Q1208.5 91 1208.5 94.5 Q1208 98.5 1203.5 99.8 Q1206 97.5 1205.5 96 Q1203 95.5 1203 93.5 Q1203.5 91.5 1205 91.5 Z"/>
  </g>
  <circle cx="1228.4" cy="91.8" r="9.1" fill="none" stroke="#2173c8" stroke-width="2"/>
  <path d="M1225.6 87.5 V90 M1231 87.5 V90" stroke="#2173c8" stroke-width="1.6"/>
  <path d="M1223.5 93.8 Q1228.4 98.5 1233.3 93.8" fill="none" stroke="#2173c8" stroke-width="1.6"/>
  <rect x="1253.5" y="81" width="5.5" height="12.5" rx="2.75" fill="#2173c8"/>
  <path d="M1249.8 90 Q1249.8 96.5 1256.2 96.5 Q1262.6 96.5 1262.6 90 M1256.2 96.5 V100.5 M1252.5 101 H1260" fill="none" stroke="#2173c8" stroke-width="1.8"/>
  <rect x="1273" y="84" width="20" height="15.3" rx="2.2" fill="#2173c8"/>
  <g fill="#fff"><rect x="1275.8" y="86.5" width="1.8" height="1.6"/><rect x="1279.3" y="86.5" width="1.8" height="1.6"/><rect x="1282.8" y="86.5" width="1.8" height="1.6"/><rect x="1286.3" y="86.5" width="3.5" height="1.6"/>
  <rect x="1276.8" y="90" width="1.8" height="1.6"/><rect x="1280.3" y="90" width="1.8" height="1.6"/><rect x="1283.8" y="90" width="1.8" height="1.6"/><rect x="1287.3" y="90" width="1.8" height="1.6"/>
  <rect x="1275.8" y="93.5" width="1.8" height="1.6"/><rect x="1279.3" y="93.5" width="10.5" height="1.6"/></g>
  <circle cx="1309.4" cy="86.3" r="3.5" fill="#b3c1d6"/>
  <path d="M1301.8 98 Q1302 91.5 1308 90.8 H1312 V100.7 H1304 Z" fill="#b3c1d6"/>
  <text x="1308" y="100.6" font-family="LibCJK, Liberation Sans, sans-serif" font-size="11" font-weight="bold" fill="#b3c1d6" stroke="#fff" stroke-width="1.6" paint-order="stroke" letter-spacing="-0.5">16</text>
  <path d="M1333 83 Q1337 85.5 1341 83 L1346 87 L1344 90.5 L1342.5 89.5 V99 Q1342.5 100.5 1341 100.5 H1333 Q1331.5 100.5 1331.5 99 V89.5 L1330 90.5 L1328.3 87 Z" fill="#2173c8"/>
  <rect x="1356" y="83" width="7" height="7" rx="1" fill="#2173c8"/>
  <rect x="1365.5" y="83.8" width="6.2" height="6.2" rx="1" fill="none" stroke="#2173c8" stroke-width="1.6"/>
  <rect x="1356" y="92.5" width="7" height="7" rx="1" fill="#2173c8"/>
  <rect x="1365" y="92.5" width="7" height="7" rx="1" fill="#2173c8"/>
</svg>


</body></html>
